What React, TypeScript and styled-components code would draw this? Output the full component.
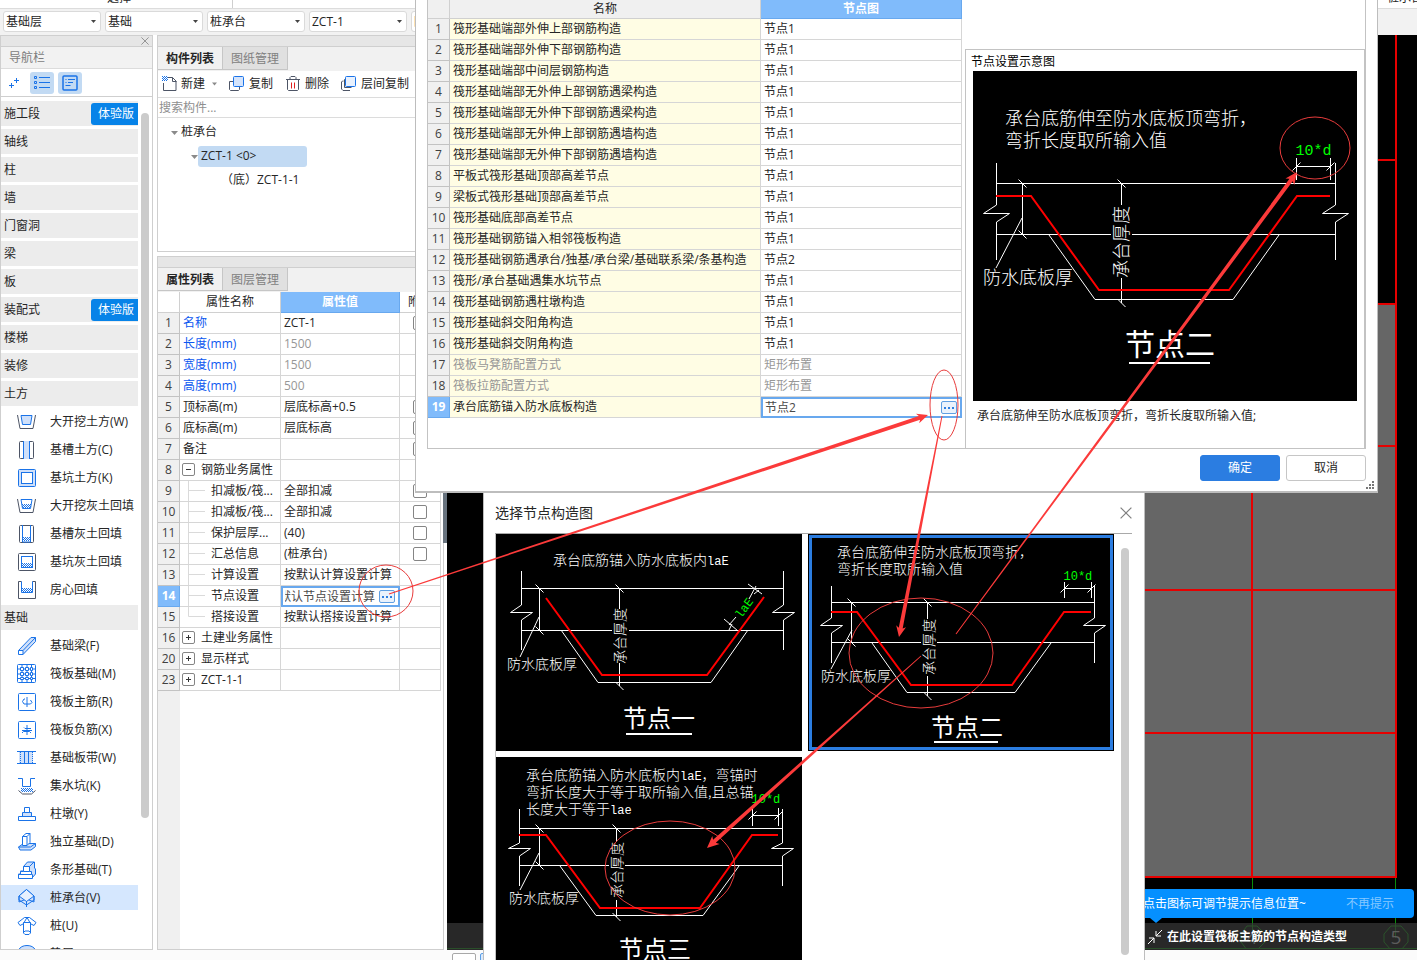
import React from 'react';
import styled, { createGlobalStyle, css } from 'styled-components';

const Global = createGlobalStyle`
  * { box-sizing: border-box; }
  body {
    margin: 0;
    font: 12px/20px "Open Sans", "Noto Sans CJK SC", sans-serif;
    color: #262626;
    background: #fff;
  }
  button, input, select { font: inherit; color: inherit; margin: 0; }
  button { cursor: pointer; }
`;

const BLUE = '#1a73e8';
const DARK = '#4d5566';
const PALE = '#cfe0fa';
const LINE = '#cfcfcf';

/* ---------- application shell ---------- */

const Shell = styled.div`
  position: relative;
  display: flex;
  flex-direction: column;
  height: 100vh;
  overflow: hidden;
`;

const Ribbon = styled.header`
  display: flex;
  justify-content: space-between;
  align-items: flex-end;
  flex: none;
  height: 8px;
  margin-right: -6px;
  padding: 0 0 0 107px;
  overflow: hidden;
`;

const RibbonLabel = styled.span`
  height: 20px;
  line-height: 20px;
  white-space: nowrap;
`;

const RibbonGroup = styled.div`
  display: flex;
  align-items: flex-end;
  width: 126px;
  border-right: 1px solid ${LINE};
`;

const FilterBar = styled.div`
  display: flex;
  gap: 4px;
  flex: none;
  height: 27px;
  padding: 2px 3px 3px;
  background: #f2f2f2;
  border-top: 1px solid #dcdcdc;
`;

const SelectBox = styled.label`
  position: relative;
  width: 98px;
  flex: none;
`;

const Select = styled.select`
  appearance: none;
  width: 100%;
  height: 21px;
  padding: 0 16px 0 2px;
  line-height: 18px;
  border: 1px solid #dadada;
  border-radius: 3px;
  background: #fff;
`;

const Caret = styled.svg`
  position: absolute;
  right: 5px;
  top: 9px;
  pointer-events: none;
`;

const Body = styled.div`
  display: flex;
  flex: 1;
  min-height: 0;
`;

const StatusBar = styled.footer`
  display: flex;
  gap: 4px;
  flex: none;
  height: 10px;
  padding: 3px 0 0 452px;
  background: #fbfbfb;
  overflow: hidden;
`;

const StatusButton = styled.button<{ $active?: boolean }>`
  flex: none;
  width: 24px;
  height: 20px;
  padding: 0;
  border: 1px solid ${(p) => (p.$active ? '#5b9fe8' : '#a8a8a8')};
  border-radius: 2px;
  background: ${(p) => (p.$active ? '#dbeafb' : '#fff')};
`;

const Strip = styled.div`
  display: flex;
  justify-content: flex-end;
  align-items: center;
  flex: none;
  height: 12px;
  padding-right: 3px;
  background: #e6e6e6;
  border: 1px solid ${LINE};
  border-width: 1px 0;
`;

const PlainButton = styled.button`
  display: inline-flex;
  align-items: center;
  padding: 0;
  border: 0;
  background: none;
`;

/* ---------- navigation ---------- */

const Nav = styled.nav`
  display: flex;
  flex-direction: column;
  flex: none;
  width: 153px;
  border: 1px solid ${LINE};
  border-top: 0;
`;

const NavTitle = styled.div`
  flex: none;
  height: 22px;
  padding-left: 8px;
  line-height: 21px;
  color: #7d7d7d;
  background: #f2f2f2;
  border-bottom: 1px solid #dcdcdc;
`;

const NavTools = styled.div`
  display: flex;
  align-items: center;
  gap: 4px;
  flex: none;
  height: 28px;
  padding-left: 1px;
  border-bottom: 1px solid ${LINE};
`;

const NavTool = styled.button<{ $on?: boolean }>`
  display: flex;
  align-items: center;
  justify-content: center;
  width: 24px;
  height: 22px;
  padding: 0;
  border: 0;
  border-radius: 3px;
  background: ${(p) => (p.$on ? '#c2daf3' : 'none')};
`;

const NavScroll = styled.div`
  display: flex;
  flex: 1;
  min-height: 0;
  gap: 3px;
  overflow: hidden;
`;

const NavList = styled.ul`
  display: flex;
  flex-direction: column;
  gap: 3px;
  width: 137px;
  margin: 0;
  padding: 4px 0 0;
  list-style: none;
`;

const NavGroup = styled.li`
  display: flex;
  align-items: center;
  justify-content: space-between;
  flex: none;
  height: 25px;
  padding-left: 3px;
  background: #ececec;
`;

const NavItem = styled.li<{ $on?: boolean }>`
  flex: none;
  height: 25px;
  background: ${(p) => (p.$on ? '#d5e7fe' : 'none')};
`;

const NavLink = styled.a`
  display: flex;
  align-items: center;
  gap: 13px;
  height: 25px;
  padding-left: 16px;
  color: inherit;
  text-decoration: none;
  white-space: nowrap;
`;

const Trial = styled.span`
  width: 47px;
  height: 22px;
  padding-left: 7px;
  line-height: 22px;
  color: #fff;
  background: #0783e8;
  border-radius: 3px 0 0 3px;
`;

const Thumb = styled.div<{ $top: number; $height: number }>`
  flex: none;
  width: 8px;
  height: ${(p) => p.$height}px;
  margin-top: ${(p) => p.$top}px;
  border-radius: 4px;
  background: #cbcbcb;
`;

/* ---------- middle column ---------- */

const Column = styled.div`
  display: flex;
  flex-direction: column;
  gap: 4px;
  flex: none;
  width: 287px;
  margin-left: 4px;
`;

const Panel = styled.section<{ $grow?: boolean }>`
  display: flex;
  flex-direction: column;
  ${(p) => (p.$grow ? css`flex: 1; min-height: 0;` : css`flex: none; height: 217px;`)}
  border: 1px solid ${LINE};
  border-top: 0;
`;

const Tabs = styled.div`
  display: flex;
  flex: none;
  height: 24px;
  background: #f1f1f1;
`;

const Tab = styled.button<{ $on?: boolean }>`
  width: 65px;
  height: 23px;
  padding: 1px 0 0;
  color: ${(p) => (p.$on ? '#262626' : '#808080')};
  font-weight: ${(p) => (p.$on ? 700 : 400)};
  background: ${(p) => (p.$on ? '#f1f1f1' : '#e0e0e0')};
  border: 1px solid #c6c6c6;
  border-width: 0 1px 1px 0;
`;

const Tools = styled.div`
  display: flex;
  align-items: center;
  gap: 12px;
  flex: none;
  height: 27px;
  padding-left: 4px;
  border-bottom: 1px solid #dcdcdc;
`;

const ToolButton = styled(PlainButton)`
  gap: 4px;
  white-space: nowrap;
`;

const DropMark = styled.span`
  display: flex;
  padding-left: 3px;
`;

const Search = styled.input`
  flex: none;
  height: 20px;
  padding: 0 1px;
  border: 0;
  border-bottom: 1px solid #dcdcdc;
  outline: 0;
  &::placeholder { color: #8f8f8f; opacity: 1; }
`;

const Tree = styled.ul`
  display: flex;
  flex-direction: column;
  gap: 3px;
  margin: 0;
  padding: 4px 0 0;
  list-style: none;
`;

const TreeRow = styled.li<{ $indent: number }>`
  display: flex;
  align-items: center;
  gap: 3px;
  height: 21px;
  padding-left: ${(p) => p.$indent}px;
`;

const TreeText = styled.span<{ $on?: boolean }>`
  height: 21px;
  ${(p) => p.$on && css`
    width: 109px;
    padding: 0 3px;
    margin-left: -3px;
    border-radius: 3px;
    background: #c2daf3;
  `}
`;

const GridArea = styled.div`
  flex: 1;
  min-height: 0;
  background: linear-gradient(to right, #f0f0f0 22px, #fff 22px);
`;

/* ---------- data tables ---------- */

const Table = styled.table`
  width: 100%;
  table-layout: fixed;
  border-collapse: separate;
  border-spacing: 0;
`;

const Th = styled.th<{ $on?: boolean; $fill?: string; $h: number }>`
  height: ${(p) => p.$h}px;
  padding: 0;
  line-height: ${(p) => p.$h - 1}px;
  font-weight: ${(p) => (p.$on ? 700 : 400)};
  color: ${(p) => (p.$on ? '#fff' : 'inherit')};
  background: ${(p) => (p.$on ? '#80bbfb' : p.$fill ?? '#fff')};
  border: 1px solid ${(p) => (p.$on ? '#68a8ee' : '#d0d0d0')};
  border-width: 0 1px 1px 0;
`;

const RowHead = styled.th<{ $on?: boolean }>`
  height: 21px;
  padding: 0;
  font-weight: ${(p) => (p.$on ? 700 : 400)};
  color: ${(p) => (p.$on ? '#fff' : '#404040')};
  background: ${(p) => (p.$on ? '#80bbfb' : '#f0f0f0')};
  border: 1px solid ${(p) => (p.$on ? '#68a8ee' : '#c3c3c3')};
  border-width: 0 1px 1px 0;
`;

const Td = styled.td<{ $tone?: 'blue' | 'gray'; $fill?: string; $edit?: boolean }>`
  height: 21px;
  padding: 0 0 0 3px;
  white-space: nowrap;
  overflow: hidden;
  color: ${(p) => (p.$tone === 'blue' ? '#0b57f0' : p.$tone === 'gray' ? '#979797' : 'inherit')};
  background: ${(p) => p.$fill ?? '#fff'};
  border: 1px solid #d6d6d6;
  border-width: 0 1px 1px 0;
  ${(p) => p.$edit && css`
    padding: 0;
    border: 2px solid #68a8ee;
  `}
`;

const CellFlex = styled.div`
  display: flex;
  align-items: center;
  height: 20px;
`;

const Editor = styled.div`
  display: flex;
  align-items: center;
  gap: 4px;
  height: 17px;
  padding: 0 3px 0 2px;
`;

const EditInput = styled.input<{ $tail?: boolean }>`
  flex: 1;
  min-width: 0;
  height: 17px;
  padding: 0;
  border: 0;
  outline: 0;
  color: #4a4a4a;
  background: none;
  ${(p) => p.$tail && css`direction: rtl;`}
`;

const MoreButton = styled.button`
  display: flex;
  align-items: center;
  justify-content: center;
  gap: 2px;
  flex: none;
  width: 16px;
  height: 13px;
  padding: 0;
  border: 1px solid #5f9fe2;
  border-radius: 2px;
  background: #eaf2fc;
`;

const Dot = styled.i`
  width: 2px;
  height: 2px;
  background: #2f7fe0;
`;

const Check = styled.input`
  appearance: none;
  display: block;
  width: 14px;
  height: 14px;
  margin: 0 0 0 10px;
  border: 1px solid #858585;
  border-radius: 2px;
  background: #fff;
`;

const Toggle = styled.button`
  display: flex;
  align-items: center;
  justify-content: center;
  width: 13px;
  height: 13px;
  margin: 0 6px 2px -1px;
  padding: 0;
  border: 1px solid #858585;
  border-radius: 2px;
  background: #fff;
`;

const Guide = styled.svg`
  flex: none;
  margin-right: 3px;
`;

/* ---------- drawing area ---------- */

const Stage = styled.main`
  position: relative;
  flex: 1;
  min-width: 0;
  margin-left: 3px;
  background: #000;
  overflow: hidden;
`;

const StageDrawing = styled.svg`
  display: block;
`;

const Splitter = styled.div`
  position: absolute;
  left: 443px;
  top: 493px;
  width: 4px;
  height: 50px;
  background: #68737e;
`;

const HintBar = styled.div`
  position: absolute;
  left: 0;
  right: 0;
  bottom: 0;
  display: flex;
  align-items: center;
  gap: 4px;
  height: 27px;
  padding-left: 700px;
  color: #fff;
  font-weight: 700;
  background: rgba(56, 56, 56, 0.72);
`;

const Tip = styled.div`
  position: absolute;
  right: 3px;
  bottom: 32px;
  display: flex;
  align-items: center;
  justify-content: space-between;
  width: 291px;
  height: 29px;
  padding: 0 20px;
  color: #fff;
  background: #0590ff;
  border-radius: 4px;
  &::after {
    content: '';
    position: absolute;
    left: 27px;
    top: 29px;
    border: 6px solid transparent;
    border-top: 5px solid #0590ff;
    border-bottom: 0;
  }
`;

const TipLink = styled.a`
  color: #86c8ff;
  text-decoration: none;
`;

/* ---------- dialogs ---------- */

const SettingsDialog = styled.section`
  position: absolute;
  left: 415px;
  right: 39px;
  top: 0;
  padding: 0 11px 10px;
  background: #fff;
  border: solid #bdbdbd;
  border-width: 0 1px 2px;
`;

const SettingsFrame = styled.div`
  display: grid;
  grid-template-columns: 534px minmax(0, 1fr);
  column-gap: 3px;
  height: 449px;
  border: solid #c3c3c3;
  border-width: 0 1px 1px;
`;

const TableArea = styled.div`
  min-width: 0;
`;

const Preview = styled.div`
  display: flex;
  flex-direction: column;
  margin-top: 49px;
  padding: 2px 7px 0;
  border: solid #c3c3c3;
  border-width: 1px 1px 0;
`;

const PreviewTitle = styled.div`
  height: 19px;
  margin-left: -2px;
  color: #000;
`;

const PreviewNote = styled.div`
  padding: 5px 4px;
`;

const Actions = styled.div`
  display: flex;
  justify-content: flex-end;
  gap: 6px;
  padding-top: 6px;
`;

const ActionButton = styled.button<{ $primary?: boolean }>`
  width: 80px;
  height: 26px;
  padding: 0;
  border: 1px solid ${(p) => (p.$primary ? '#2b7de1' : '#c6c6c6')};
  border-radius: 3px;
  color: ${(p) => (p.$primary ? '#fff' : '#262626')};
  background: ${(p) => (p.$primary ? '#2b7de1' : '#fff')};
`;

const Grip = styled.svg`
  position: absolute;
  right: 3px;
  bottom: 2px;
`;

const PickerDialog = styled.section`
  position: absolute;
  left: 483px;
  top: 493px;
  bottom: 0;
  display: flex;
  flex-direction: column;
  width: 662px;
  padding: 0 12px 0 11px;
  overflow: hidden;
  background: #fff;
  border: solid #bdbdbd;
  border-width: 0 1px;
`;

const PickerHead = styled.div`
  display: flex;
  align-items: center;
  justify-content: space-between;
  flex: none;
  height: 41px;
  font-size: 14px;
  border-bottom: 1px solid #a9a9a9;
`;

const PickerBody = styled.div`
  display: flex;
  justify-content: space-between;
  padding-right: 3px;
`;

const PickerGrid = styled.div`
  display: grid;
  grid-template-columns: repeat(2, 306px);
  gap: 6px;
  border-left: 1px solid #c3c3c3;
`;

const Choice = styled.button<{ $on?: boolean }>`
  position: relative;
  display: block;
  height: 217px;
  padding: 0;
  border: 0;
  background: #000;
  ${(p) => p.$on && css`
    &::after {
      content: '';
      position: absolute;
      inset: 1px;
      border: 3px solid #2b7de1;
    }
  `}
`;

const FigureSvg = styled.svg`
  display: block;
  background: #000;
  font-family: "Noto Sans CJK SC", sans-serif;
  font-weight: 300;
`;

const Marks = styled.svg`
  position: absolute;
  inset: 0;
  width: 100%;
  height: 100%;
  pointer-events: none;
`;

/* ---------- section drawings of the footing nodes ---------- */

interface Fig {
  view: string;
  size: number;
  title: string;
  titleAt: [number, number];
  titleSize: number;
  rule: [number, number, number];
  notes: [number, number, string, string?][];
  left: number;
  right: number;
  ends: [number, number, number, number, number, number];
  top: number;
  mid: number;
  gap: [number, number];
  dimL: number;
  leader: string;
  dimC: [number, number, number, number];
  vtext: [number, number];
  slab: [number, number];
  trap: string;
  bar: string;
  d?: [number, number, number, number, number, number];
  slanted?: boolean;
}

const zig = (x: number, s: number, e: Fig['ends']) =>
  `M${x} ${e[0]}V${e[1]}L${x - s} ${e[2]}H${x + s}L${x} ${e[3]}V${e[4]}`;

const tick = (x: number, y: number) => `M${x - 4} ${y - 4}l8 8`;
const slash = (x: number, y: number) => `M${x - 4} ${y + 4}l8 -8`;

function Figure({ fig: f, width, height }: { fig: Fig; width: string; height: number }) {
  const [c0, c1, c2, c3] = f.dimC;
  const mono = { fontFamily: 'Liberation Mono, monospace', fontWeight: 400 };
  return (
    <FigureSvg viewBox={f.view} width={width} height={height}>
      <g fill="none" stroke="#fff">
        <path d={zig(f.left, f.ends[5], f.ends)} />
        <path d={zig(f.right, f.ends[5], f.ends)} />
        <path d={`M${f.left} ${f.top}H${f.right}M${f.left} ${f.mid}H${f.gap[0]}M${f.gap[1]} ${f.mid}H${f.right}`} />
        <path d={`M${f.dimL} ${f.top}V${f.mid}${tick(f.dimL, f.top)}${tick(f.dimL, f.mid)}`} />
        <path d={f.leader} />
        <path d={`M${c0} ${f.top}V${c1}M${c0} ${c2}V${c3}${tick(c0, f.top)}${tick(c0, c3)}`} />
        <path d={f.trap} />
        {f.d && (
          <path
            d={`M${f.d[0]} ${f.d[2]}V${f.d[3]}M${f.d[1]} ${f.d[2]}V${f.d[3]}M${f.d[0]} ${f.d[4]}H${f.d[1]}${slash(f.d[0], f.d[4])}${slash(f.d[1], f.d[4])}`}
          />
        )}
        {f.slanted && (
          <path d="M748 584l14 10M749 599l7 -13M754 594l5 -4M724 619l14 12M736 617l-7 8M729 630l3 -6" />
        )}
      </g>
      <path d={f.bar} fill="none" stroke="#f00" strokeWidth="2" />
      <g fill="#fff" fontSize={f.size}>
        {f.notes.map(([x, y, text, latin]) => (
          <text key={y} x={x} y={y}>
            {text}
            {latin && <tspan fontSize="12" style={mono}>{latin}</tspan>}
            {latin === 'laE' && f.notes.length > 1 && '，弯锚时'}
          </text>
        ))}
        <text x={f.slab[0]} y={f.slab[1]}>防水底板厚</text>
        <text transform={`translate(${f.vtext[0]} ${f.vtext[1]}) rotate(-90)`}>承台厚度</text>
        <text x={f.titleAt[0]} y={f.titleAt[1]} fontSize={f.titleSize} fontWeight="400">{f.title}</text>
      </g>
      <path d={`M${f.rule[0]} ${f.rule[2]}H${f.rule[1]}`} stroke="#fff" strokeWidth="2" />
      {f.d && (
        <text x={f.d[0] - 1} y={f.d[5]} fill="#0f0" fontSize={f.size === 18 ? 15 : 12} style={mono}>10*d</text>
      )}
      {f.slanted && (
        <text transform="translate(741 619) rotate(-54)" fill="#0f0" fontSize="12" style={mono}>laE</text>
      )}
    </FigureSvg>
  );
}

const large: Fig = {
  view: '973 71 384 330', size: 18,
  title: '节点二', titleAt: [1125, 355], titleSize: 30, rule: [1129, 1210, 363],
  notes: [[1005, 125, '承台底筋伸至防水底板顶弯折，'], [1005, 147, '弯折长度取所输入值']],
  left: 996.5, right: 1335.5, ends: [163, 205, 213.5, 222, 260, 13],
  top: 183.5, mid: 234.5, gap: [1111, 1132], dimL: 1022.5, leader: 'M1022 218L996 268',
  dimC: [1121.5, 205, 278, 303], vtext: [1128, 278], slab: [983, 284],
  trap: 'M1049 235L1095 299.500H1233L1279 235',
  bar: 'M996 196H1031L1099 290H1229L1297 196H1330',
  d: [1296.5, 1330.5, 158, 180, 166.5, 155],
};

const first: Fig = {
  view: '496 534 306 217', size: 14,
  title: '节点一', titleAt: [623, 727], titleSize: 24, rule: [626, 692, 734],
  notes: [[553, 565, '承台底筋锚入防水底板内', 'laE']],
  left: 521.5, right: 783.5, ends: [571, 605, 612.5, 620, 650, 11],
  top: 588.5, mid: 630.5, gap: [612, 629], dimL: 539.5, leader: 'M539 617L520 657',
  dimC: [619.5, 609, 663, 686], vtext: [625, 664], slab: [507, 669],
  trap: 'M561 630L598 682.500H711L748 630',
  bar: 'M546 598L602 675H707L764 597',
  slanted: true,
};

const second: Fig = {
  view: '808 534 306 217', size: 14,
  title: '节点二', titleAt: [931, 736], titleSize: 24, rule: [934, 998, 742],
  notes: [[837, 557, '承台底筋伸至防水底板顶弯折，'], [837, 574, '弯折长度取所输入值']],
  left: 831.5, right: 1094.5, ends: [586, 618, 625.5, 633, 663, 11],
  top: 602.5, mid: 642.5, gap: [921, 937], dimL: 851.5, leader: 'M852 630L831 669',
  dimC: [927.5, 619, 676, 696], vtext: [934, 675], slab: [821, 681],
  trap: 'M872 643L907 692.500H1015L1051 643',
  bar: 'M831 612H857L911 685H1012L1064 612H1091',
  d: [1064.5, 1091.5, 582, 598, 588.5, 580],
};

const third: Fig = {
  view: '496 757 306 217', size: 14,
  title: '节点三', titleAt: [619, 958], titleSize: 24, rule: [622, 688, 965],
  notes: [
    [526, 780, '承台底筋锚入防水底板内', 'laE'],
    [526, 797, '弯折长度大于等于取所输入值,且总锚'],
    [526, 814, '长度大于等于', 'lae'],
  ],
  left: 519.5, right: 782.5, ends: [809, 843, 848.5, 856, 886, 11],
  top: 828.5, mid: 865.5, gap: [609, 625], dimL: 539.5, leader: 'M539 853L520 890',
  dimC: [616.5, 842, 900, 917], vtext: [622, 898], slab: [509, 903],
  trap: 'M560 866L596 915.500H703L739 866',
  bar: 'M519 835H546L600 908H700L752 835H778',
  d: [752.5, 778.5, 808, 826, 815.5, 803],
};

/* ---------- icons ---------- */

const hatch = (x: number, y: number, w: number) => (
  <path
    d={`M${x} ${y}.500h${w}M${x + 1} ${y + 1}.500h${w - 1}M${x} ${y + 2}.500h${w}M${x + 1} ${y + 3}.500h${w - 1}`}
    strokeDasharray="1 1"
  />
);

const icons: Record<string, React.ReactNode> = {
  openCut: <><path stroke={DARK} d="M.5 3L3 16.500H16L18.500 3" /><path fill={PALE} d="M4 3.500H15L13.500 12.500H5.500Z" /></>,
  trench: <><rect stroke={DARK} x="2.500" y="1.500" width="14" height="17" rx="1" /><path fill={PALE} stroke="none" d="M7 1h6v18H7z" /><path d="M6.500 1v18M12.500 1v18" /></>,
  pit: <><rect fill={PALE} x="1.500" y="1.500" width="17" height="17" rx="1" /><rect fill="#fff" x="4.500" y="4.500" width="11" height="11" /></>,
  openFill: <><path stroke={DARK} d="M.5 3L3 16.500H16L18.500 3" /><path d="M4 3.500H15L13.500 12.500H5.500Z" />{hatch(5, 8, 9)}</>,
  trenchFill: <><rect stroke={DARK} x="2.500" y="1.500" width="14" height="17" rx="1" /><path d="M5.500 1v17h8V1" />{hatch(6, 13, 7)}</>,
  pitFill: <><rect stroke={DARK} x="1.500" y="1.500" width="17" height="17" rx="1" /><rect x="4.500" y="4.500" width="11" height="11" />{hatch(5, 11, 10)}</>,
  roomFill: <><path stroke={DARK} d="M4.500 1.500h-3v17h17v-17h-3" /><path d="M4.500 1.500v11h11v-11" />{hatch(5, 8, 10)}</>,
  beam: <><path fill={PALE} d="M1.500 14.500L14 1.500h4.500v4L6 18.500" /><path fill="#fff" d="M1.500 14.500h4.500v4H1.500z" /><path d="M6 14.500L18.500 1.500" /></>,
  raft: (
    <>
      <rect x=".5" y=".5" width="18" height="18" rx="1" />
      <path d="M3.500 3.500h3v3h-3zM8.500 3.500h3v3h-3zM13.500 3.500h2v3h-2zM3.500 8.500h3v3h-3zM8.500 8.500h3v3h-3zM13.500 8.500h2v3h-2zM3.500 13.500h3v2h-3zM8.500 13.500h3v2h-3zM13.500 13.500h2v2h-2z" />
      <path d="M5 .5v3M10 .5v3M14.500 .5v3M5 15.500v3M10 15.500v3M14.500 15.500v3M5 6.500v2M10 6.500v2M14.500 6.500v2M5 11.500v2M10 11.500v2M14.500 11.500v2M.5 5h3M.5 10h3M.5 14.500h3M15.500 5h3M15.500 10h3M15.500 14.500h3M6.500 5h2M6.500 10h2M6.500 14.500h2M11.500 5h2M11.500 10h2M11.500 14.500h2" />
    </>
  ),
  mainBar: <><rect x="1.500" y="1.500" width="17" height="17" rx="1" /><path d="M10 5v10M8 7H7L5.500 9.500 7 12h6.500L15 10.500 13.500 8" /></>,
  topBar: <><rect x="1.500" y="1.500" width="17" height="17" rx="1" /><path d="M10 5v10M5 10.500h10M7 7.500l1 1h6M5 13l1.500-1.500h6l1.500 1.500" /></>,
  strip: <><path fill={PALE} stroke="none" d="M2 4h14v12H2z" /><path d="M0 3.500h19M0 15.500h19M7.500 4v11M11.500 4v11" /><path strokeDasharray="1 1" d="M3.500 4v11M15.500 4v11" /></>,
  sump: <><path d="M1 2.500h4.500v8h8v-8H18" /><path stroke={DARK} d="M1.500 14.500l4 3.500h9l4-3.500" />{hatch(4, 12, 12)}</>,
  pier: <><path fill={PALE} d="M5.500 8.500h9v4h-9z" /><path fill="#fff" d="M7.500 3.500h5v5h-5zM1.500 12.500h17v4h-17z" /></>,
  isolated: <><path fill={PALE} d="M1.500 15l5-3.500h12v3L14 18H3z" /><path fill="#fff" d="M5.500 13.500v-9L9 1.500h4v9l-3 3z" /><path d="M10 13.500v-9H5.500M10 4.500l3-3M1.500 15h12l5-3.500" /></>,
  stripFooting: <><path fill={PALE} d="M6.500 6.500l4-4.500h7v6l1 1v5l-3.500 4h-13.500v-4h2v-3h3z" /><path fill="#fff" d="M6.500 6.500h6v5h2v3h1v4H1.500v-4h2v-3h3z" /><path d="M12.500 6.500l4.500-4.500M3.500 14.500h11M6.500 11.500h6" /></>,
  cap: <><path fill={PALE} d="M9.500 1.500L17 8v6l-7.500-3L2 14V8z" /><path fill="#e8f1fe" d="M9.500 1.500L17 8l-7.500 5.500L2 8z" /><path d="M2 8v4l7.500 5 7.500-5V8M9.500 13v6" /></>,
  pile: <><path fill="#fff" d="M1 6.500l6.500-5h5l6.500 5-2 3-4-2h-6l-4 2z" /><path fill="#fff" d="M6.500 6.500h7V17l-1.500 1.500H8L6.500 17zM6.500 16.500l1.500-1.500h4l1.500 1.500M10 1.500l-3.500 6M10 1.500l3.500 6" /></>,
  round: <path fill={PALE} d="M1.500 6Q4 1.500 10 1.500T18.500 6V19H1.500z" />,
};

const Icon = ({ name }: { name: string }) => (
  <svg width="20" height="20" viewBox="0 0 20 20" fill="none" stroke={BLUE} aria-hidden="true">{icons[name]}</svg>
);

const Cross = ({ size, color }: { size: number; color: string }) => (
  <svg width={size} height={size} viewBox="0 0 10 10" stroke={color} fill="none"><path d="M.5 .5l9 9M9.500 .5l-9 9" /></svg>
);

const Down = ({ color = '#8a8a8a', size = 7 }: { color?: string; size?: number }) => (
  <svg width={size} height="4" viewBox="0 0 7 4" fill={color}><path d="M0 0h7L3.500 4z" /></svg>
);

const NewIcon = () => (
  <svg width="15" height="16" fill="none" stroke={DARK}>
    <path d="M6 1.500h4.500l3.500 3.500v9.500H1.500V7M10.500 1.500v4h4" />
    <path stroke={BLUE} strokeDasharray="1 1" d="M0 .5h5M1 1.500h5M0 2.500h5M1 3.500h5M0 4.500h5" />
  </svg>
);

const CopyIcon = () => (
  <svg width="16" height="16" fill="none" stroke={DARK}>
    <path d="M4 5.500H.500v8l1 1h8l1-1V11" /><rect x="4.500" y=".5" width="10" height="10" rx="1" stroke={BLUE} fill="#d5e4fb" />
  </svg>
);

const TrashIcon = () => (
  <svg width="16" height="16" viewBox="-1 0 16 16" fill="none" stroke={DARK}>
    <path d="M0 3.500h14M4 3V1.500L5 .500h4l1 1V3M1.500 4v9.500l1 1h9l1-1V4" /><path stroke="#e02020" d="M5.500 6.500v6M8.500 6.500v6" />
  </svg>
);

const LayerCopyIcon = () => (
  <svg width="16" height="16" fill="none" stroke={DARK}>
    <path d="M2.500 5h-1l-1 1v7l1.500 1.500h7M4 3.500h-.5v8h7" /><rect x="4.500" y=".5" width="10" height="10" rx="1" stroke={BLUE} fill="#e8f1fe" />
  </svg>
);

/* ---------- data ---------- */

const filters = ['基础层', '基础', '桩承台', 'ZCT-1'];

const navEntries: { text: string; icon?: string; trial?: boolean; on?: boolean }[] = [
  { text: '施工段', trial: true }, { text: '轴线' }, { text: '柱' }, { text: '墙' }, { text: '门窗洞' },
  { text: '梁' }, { text: '板' }, { text: '装配式', trial: true }, { text: '楼梯' }, { text: '装修' }, { text: '土方' },
  { text: '大开挖土方(W)', icon: 'openCut' }, { text: '基槽土方(C)', icon: 'trench' }, { text: '基坑土方(K)', icon: 'pit' },
  { text: '大开挖灰土回填', icon: 'openFill' }, { text: '基槽灰土回填', icon: 'trenchFill' },
  { text: '基坑灰土回填', icon: 'pitFill' }, { text: '房心回填', icon: 'roomFill' },
  { text: '基础' },
  { text: '基础梁(F)', icon: 'beam' }, { text: '筏板基础(M)', icon: 'raft' }, { text: '筏板主筋(R)', icon: 'mainBar' },
  { text: '筏板负筋(X)', icon: 'topBar' }, { text: '基础板带(W)', icon: 'strip' }, { text: '集水坑(K)', icon: 'sump' },
  { text: '柱墩(Y)', icon: 'pier' }, { text: '独立基础(D)', icon: 'isolated' }, { text: '条形基础(T)', icon: 'stripFooting' },
  { text: '桩承台(V)', icon: 'cap', on: true }, { text: '桩(U)', icon: 'pile' }, { text: '垫层', icon: 'round' },
];

type Prop = { n: number; name: string; value?: string; tone?: 'blue'; dim?: boolean; check?: boolean; kind?: '-' | '+' | 'child' | 'last'; edit?: boolean };

const props: Prop[] = [
  { n: 1, name: '名称', value: 'ZCT-1', tone: 'blue', check: true },
  { n: 2, name: '长度(mm)', value: '1500', tone: 'blue', dim: true },
  { n: 3, name: '宽度(mm)', value: '1500', tone: 'blue', dim: true },
  { n: 4, name: '高度(mm)', value: '500', tone: 'blue', dim: true },
  { n: 5, name: '顶标高(m)', value: '层底标高+0.5', check: true },
  { n: 6, name: '底标高(m)', value: '层底标高', check: true },
  { n: 7, name: '备注', check: true },
  { n: 8, name: '钢筋业务属性', kind: '-' },
  { n: 9, name: '扣减板/筏...', value: '全部扣减', check: true, kind: 'child' },
  { n: 10, name: '扣减板/筏...', value: '全部扣减', check: true, kind: 'child' },
  { n: 11, name: '保护层厚...', value: '(40)', check: true, kind: 'child' },
  { n: 12, name: '汇总信息', value: '(桩承台)', check: true, kind: 'child' },
  { n: 13, name: '计算设置', value: '按默认计算设置计算', kind: 'child' },
  { n: 14, name: '节点设置', value: '按默认节点设置计算', kind: 'child', edit: true },
  { n: 15, name: '搭接设置', value: '按默认搭接设置计算', kind: 'last' },
  { n: 16, name: '土建业务属性', kind: '+' },
  { n: 20, name: '显示样式', kind: '+' },
  { n: 23, name: 'ZCT-1-1', kind: '+' },
];

const nodes: [string, string][] = [
  ['筏形基础端部外伸上部钢筋构造', '节点1'], ['筏形基础端部外伸下部钢筋构造', '节点1'],
  ['筏形基础端部中间层钢筋构造', '节点1'], ['筏形基础端部无外伸上部钢筋遇梁构造', '节点1'],
  ['筏形基础端部无外伸下部钢筋遇梁构造', '节点1'], ['筏形基础端部无外伸上部钢筋遇墙构造', '节点1'],
  ['筏形基础端部无外伸下部钢筋遇墙构造', '节点1'], ['平板式筏形基础顶部高差节点', '节点1'],
  ['梁板式筏形基础顶部高差节点', '节点1'], ['筏形基础底部高差节点', '节点1'],
  ['筏形基础钢筋锚入相邻筏板构造', '节点1'], ['筏形基础钢筋遇承台/独基/承台梁/基础联系梁/条基构造', '节点2'],
  ['筏形/承台基础遇集水坑节点', '节点1'], ['筏形基础钢筋遇柱墩构造', '节点1'],
  ['筏形基础斜交阳角构造', '节点1'], ['筏形基础斜交阴角构造', '节点1'],
  ['筏板马凳筋配置方式', '矩形布置'], ['筏板拉筋配置方式', '矩形布置'],
  ['承台底筋锚入防水底板构造', '节点2'],
];

/* ---------- parts ---------- */

const More = () => (
  <MoreButton aria-label="更多"><Dot /><Dot /><Dot /></MoreButton>
);

function NavPanel() {
  return (
    <Nav>
      <Strip><PlainButton aria-label="关闭"><Cross size={8} color="#808080" /></PlainButton></Strip>
      <NavTitle>导航栏</NavTitle>
      <NavTools>
        <NavTool aria-label="添加">
          <svg width="12" height="12" stroke={BLUE} fill="none"><path d="M3.500 6v5M1 8.500h5M8.500 1v5M6 3.500h5" /></svg>
        </NavTool>
        <NavTool $on aria-label="列表">
          <svg width="16" height="14" stroke={BLUE} fill="none">
            <path d="M5 1.500h11M5 6.500h11M5 11.500h11" /><path d="M.5 .5h2v2h-2zM.5 5.500h2v2h-2zM.5 10.500h2v2h-2z" />
          </svg>
        </NavTool>
        <NavTool $on aria-label="详情">
          <svg width="16" height="16" stroke={BLUE} fill="none">
            <rect x="1" y="1" width="14" height="14" rx="1" strokeWidth="1.500" /><path d="M3.500 4.500h1M6 4.500h7M3.500 7.500h1M6 7.500h5M3.500 10.500h5" />
          </svg>
        </NavTool>
      </NavTools>
      <NavScroll>
        <NavList>
          {navEntries.map((e) =>
            e.icon ? (
              <NavItem key={e.text} $on={e.on}>
                <NavLink href="#"><Icon name={e.icon} />{e.text}</NavLink>
              </NavItem>
            ) : (
              <NavGroup key={e.text}>{e.text}{e.trial && <Trial>体验版</Trial>}</NavGroup>
            ),
          )}
        </NavList>
        <Thumb $top={16} $height={705} />
      </NavScroll>
    </Nav>
  );
}

function NameCell({ p }: { p: Prop }) {
  return (
    <CellFlex>
      {(p.kind === '-' || p.kind === '+') && (
        <Toggle aria-label="展开">
          <svg width="7" height="7" stroke="#333"><path d={p.kind === '-' ? 'M1 3.500h5' : 'M1 3.500h5M3.500 1v5'} /></svg>
        </Toggle>
      )}
      {(p.kind === 'child' || p.kind === 'last') && (
        <Guide width="25" height="20" stroke="#dadada" fill="none">
          <path d={p.kind === 'last' ? 'M5.500 0v9.500H22' : 'M5.500 0v20M5.500 9.500H22'} />
        </Guide>
      )}
      {p.name}
    </CellFlex>
  );
}

function PropertyTable() {
  return (
    <Table>
      <colgroup><col width="22" /><col width="101" /><col width="119" /><col width="41" /><col /></colgroup>
      <thead>
        <tr><Th $h={21} /><Th $h={21}>属性名称</Th><Th $h={21} $on>属性值</Th><Th $h={21}>附加</Th></tr>
      </thead>
      <tbody>
        {props.map((p) => (
          <tr key={p.n}>
            <RowHead $on={p.edit}>{p.n}</RowHead>
            <Td $tone={p.tone}><NameCell p={p} /></Td>
            {p.edit ? (
              <Td $edit><Editor><EditInput $tail aria-label={p.name} defaultValue={p.value} /><More /></Editor></Td>
            ) : (
              <Td $tone={p.dim ? 'gray' : undefined}>{p.value}</Td>
            )}
            <Td>{p.check && <Check type="checkbox" aria-label={`附加 ${p.name}`} />}</Td>
          </tr>
        ))}
      </tbody>
    </Table>
  );
}

function NodeTable() {
  return (
    <Table>
      <colgroup><col width="22" /><col width="311" /><col /></colgroup>
      <thead>
        <tr><Th $h={19} $fill="#f0f0f0" /><Th $h={19} $fill="#f0f0f0">名称</Th><Th $h={19} $on>节点图</Th></tr>
      </thead>
      <tbody>
        {nodes.map(([name, value], i) => {
          const gray = i === 16 || i === 17 ? 'gray' : undefined;
          const last = i === nodes.length - 1;
          return (
            <tr key={name}>
              <RowHead $on={last}>{i + 1}</RowHead>
              <Td $tone={gray} $fill="#fffde4">{name}</Td>
              {last ? (
                <Td $edit><Editor><EditInput aria-label={name} defaultValue={value} /><More /></Editor></Td>
              ) : (
                <Td $tone={gray}>{value}</Td>
              )}
            </tr>
          );
        })}
      </tbody>
    </Table>
  );
}

function Plan() {
  return (
    <StageDrawing width="970" height="914" viewBox="447 35 970 914" fill="none" shapeRendering="crispEdges">
      <path fill="#666" d="M1000 303h396v574h-396z" />
      <g stroke="#e60000" strokeWidth="2">
        <path d="M1000 160h396M1000 304h396M1000 446h396M1000 590h396M1000 733h396M1000 877h396" />
        <path d="M1252 446V878M1396 35V878" />
      </g>
      <path stroke="#0a8d0a" d="M1252.500 878v60M1395.500 878v60M447 948.500h970" />
      <g stroke="#0a9a0a" shapeRendering="auto">
        <path d="M1247 926h10l8 8v8l-8 8h-10l-6-8v-8zM1391 926h10l7 8v8l-7 8h-10l-7-8v-8z" />
      </g>
      <g fill="#bbb" fontSize="19" textAnchor="middle"><text x="1252" y="944">4</text><text x="1396" y="944">5</text></g>
    </StageDrawing>
  );
}

/* Tapered arrow: a hairline at the tail that widens towards the head. */
function Arrow({ from, to, w, head }: { from: [number, number]; to: [number, number]; w: number; head: number }) {
  const dx = to[0] - from[0];
  const dy = to[1] - from[1];
  const len = Math.hypot(dx, dy);
  const u = [dx / len, dy / len];
  const n = [-u[1], u[0]];
  const at = (d: number, s: number) => `${from[0] + u[0] * d + n[0] * s},${from[1] + u[1] * d + n[1] * s}`;
  const neck = len - head;
  return (
    <polygon
      fill="#fb3a3a"
      points={[at(0, 0.5), at(neck + 1, w / 2), at(neck - 1, head / 2), at(len, 0), at(neck - 1, -head / 2), at(neck + 1, -w / 2), at(0, -0.5)].join(' ')}
    />
  );
}

export default function App() {
  return (
    <>
      <Global />
      <Shell>
        <Ribbon>
          <RibbonGroup><RibbonLabel>选择</RibbonLabel></RibbonGroup>
          <RibbonLabel>桩承台</RibbonLabel>
        </Ribbon>
        <FilterBar>
          {filters.map((f) => (
            <SelectBox key={f}>
              <Select aria-label={f} defaultValue={f}><option>{f}</option></Select>
              <Caret width="5" height="3" fill="#444"><path d="M0 0h5L2.500 3z" /></Caret>
            </SelectBox>
          ))}
          <SelectBox><Select aria-label="图层"><option>图层</option></Select></SelectBox>
        </FilterBar>

        <Body>
          <NavPanel />
          <Column>
            <Panel>
              <Strip />
              <Tabs role="tablist"><Tab $on role="tab">构件列表</Tab><Tab role="tab">图纸管理</Tab></Tabs>
              <Tools>
                <ToolButton><NewIcon />新建<DropMark><Down size={5} /></DropMark></ToolButton>
                <ToolButton><CopyIcon />复制</ToolButton>
                <ToolButton><TrashIcon />删除</ToolButton>
                <ToolButton><LayerCopyIcon />层间复制</ToolButton>
              </Tools>
              <Search placeholder="搜索构件..." aria-label="搜索构件" />
              <Tree>
                <TreeRow $indent={13}><Down /><TreeText>桩承台</TreeText></TreeRow>
                <TreeRow $indent={33}><Down /><TreeText $on>ZCT-1 &lt;0&gt;</TreeText></TreeRow>
                <TreeRow $indent={63}><TreeText>（底）ZCT-1-1</TreeText></TreeRow>
              </Tree>
            </Panel>
            <Panel $grow>
              <Strip />
              <Tabs role="tablist"><Tab $on role="tab">属性列表</Tab><Tab role="tab">图层管理</Tab></Tabs>
              <GridArea><PropertyTable /></GridArea>
            </Panel>
          </Column>
          <Stage>
            <Plan />
            <HintBar>
              <svg width="16" height="16" stroke="#fff" fill="none"><path d="M15 1L9 7M9 2v5h5M1 15l6-6M2 9h5v5" /></svg>
              在此设置筏板主筋的节点构造类型
            </HintBar>
            <Tip>点击图标可调节提示信息位置~<TipLink href="#">不再提示</TipLink></Tip>
          </Stage>
        </Body>
        <StatusBar><StatusButton aria-label="视图" /><StatusButton $active aria-label="捕捉" /></StatusBar>
        <Splitter />

        <PickerDialog role="dialog" aria-label="选择节点构造图">
          <PickerHead>
            选择节点构造图
            <PlainButton aria-label="关闭"><Cross size={12} color="#808080" /></PlainButton>
          </PickerHead>
          <PickerBody>
            <PickerGrid>
              <Choice><Figure fig={first} width="100%" height={217} /></Choice>
              <Choice $on><Figure fig={second} width="100%" height={217} /></Choice>
              <Choice><Figure fig={third} width="100%" height={217} /></Choice>
            </PickerGrid>
            <Thumb $top={14} $height={407} />
          </PickerBody>
        </PickerDialog>

        <SettingsDialog role="dialog" aria-label="节点设置">
          <SettingsFrame>
            <TableArea><NodeTable /></TableArea>
            <Preview>
              <PreviewTitle>节点设置示意图</PreviewTitle>
              <Figure fig={large} width="100%" height={330} />
              <PreviewNote>承台底筋伸至防水底板顶弯折，弯折长度取所输入值;</PreviewNote>
            </Preview>
          </SettingsFrame>
          <Actions>
            <ActionButton $primary>确定</ActionButton>
            <ActionButton>取消</ActionButton>
          </Actions>
          <Grip width="8" height="8" fill="#777">
            <path d="M6 0h2v2H6zM3 3h2v2H3zM6 3h2v2H6zM0 6h2v2H0zM3 6h2v2H3zM6 6h2v2H6z" />
          </Grip>
        </SettingsDialog>

        <Marks aria-hidden="true">
          <g fill="none" stroke="#e83c3c">
            <ellipse cx="386" cy="591" rx="27" ry="26" />
            <ellipse cx="944" cy="405" rx="14" ry="35" />
            <ellipse cx="1315" cy="148" rx="35" ry="31" />
            <ellipse cx="921" cy="653" rx="72" ry="55" />
            <ellipse cx="670" cy="868" rx="65" ry="47" />
          </g>
          <Arrow from={[389, 594]} to={[928, 415]} w={4} head={10} />
          <Arrow from={[942, 416]} to={[899, 637]} w={4} head={10} />
          <Arrow from={[956, 634]} to={[1297, 172]} w={4} head={11} />
          <Arrow from={[921, 656]} to={[707, 848]} w={4} head={11} />
        </Marks>
      </Shell>
    </>
  );
}
